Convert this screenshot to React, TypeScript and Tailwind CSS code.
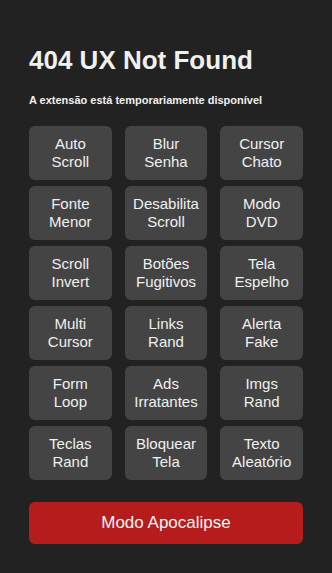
const items = [
  ["Auto", "Scroll"],
  ["Blur", "Senha"],
  ["Cursor", "Chato"],
  ["Fonte", "Menor"],
  ["Desabilita", "Scroll"],
  ["Modo", "DVD"],
  ["Scroll", "Invert"],
  ["Botões", "Fugitivos"],
  ["Tela", "Espelho"],
  ["Multi", "Cursor"],
  ["Links", "Rand"],
  ["Alerta", "Fake"],
  ["Form", "Loop"],
  ["Ads", "Irratantes"],
  ["Imgs", "Rand"],
  ["Teclas", "Rand"],
  ["Bloquear", "Tela"],
  ["Texto", "Aleatório"],
];

export default function App() {
  return (
    <div className="min-h-screen bg-[#222222] px-[29px] pt-[45px] pb-8 font-['Liberation_Sans',Arial,sans-serif] text-[#f0f0f0]">
      <h1 className="text-[26px] leading-[30px] font-bold">404 UX Not Found</h1>
      <p className="mt-[19px] text-[11px] leading-[13px] font-bold">
        A extensão está temporariamente disponível
      </p>

      <div className="mt-[19px] grid grid-cols-3 gap-x-[13px] gap-y-[6px]">
        {items.map(([a, b]) => (
          <button
            key={a + b}
            className="flex h-[54px] flex-col items-center justify-center rounded-md bg-[#444444] text-[15px] leading-[18px] text-[#f0f0f0]"
          >
            <span>{a}</span>
            <span>{b}</span>
          </button>
        ))}
      </div>

      <button className="mt-[22px] flex h-[42px] w-full items-center justify-center rounded-md bg-[#b71c1c] text-[17px] text-[#f3f3f3]">
        Modo Apocalipse
      </button>
    </div>
  );
}
